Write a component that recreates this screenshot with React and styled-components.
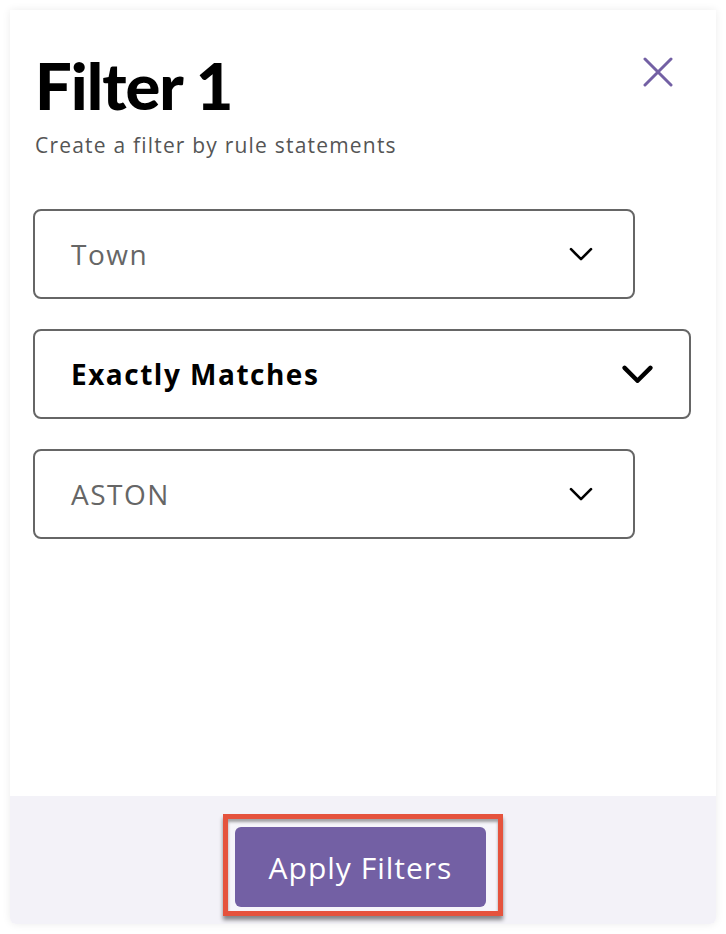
import React from 'react';
import styled, { createGlobalStyle } from 'styled-components';

const GlobalStyle = createGlobalStyle`
  body {
    margin: 0;
    background: #ffffff;
    font-family: 'Open Sans', 'Noto Sans', sans-serif;
  }
`;

const Page = styled.div`
  padding: 10px;
  width: 706px;
`;

const Card = styled.div`
  display: flex;
  flex-direction: column;
  height: 914px;
  background: #ffffff;
  border-radius: 0 0 6px 6px;
  box-shadow: 0 0 8px rgba(0, 0, 0, 0.08);
  overflow: hidden;
`;

const Body = styled.div`
  flex: 1;
  padding: 35px 43px 0 23px;
`;

const HeaderRow = styled.div`
  display: flex;
  justify-content: space-between;
  align-items: flex-start;
`;

const Title = styled.h1`
  margin: 0 0 0 2px;
  font-family: 'Lato', 'Noto Sans', sans-serif;
  font-size: 65px;
  line-height: 80px;
  font-weight: 900;
  color: #000;
  letter-spacing: -1px;
`;

const CloseButton = styled.button`
  border: none;
  background: none;
  padding: 0;
  margin-top: 12px;
  width: 30px;
  height: 30px;
  cursor: pointer;
`;

const Subtitle = styled.p`
  margin: 6px 0 0 2px;
  font-size: 21px;
  line-height: 28px;
  letter-spacing: 1.2px;
  color: #555;
`;

const Fields = styled.div`
  display: flex;
  flex-direction: column;
  gap: 30px;
  margin-top: 50px;
`;

const Select = styled.div`
  box-sizing: border-box;
  display: flex;
  align-items: center;
  justify-content: space-between;
  width: ${(p) => (p.$wide ? '658px' : '602px')};
  height: 90px;
  padding: 0 ${(p) => (p.$wide ? '36px' : '40px')} 0 36px;
  border: 2px solid #666;
  border-radius: 8px;
  font-size: 28px;
  letter-spacing: 1.5px;
  color: ${(p) => (p.$strong ? '#000' : '#666')};
  font-weight: ${(p) => (p.$strong ? 700 : 400)};
`;

const Footer = styled.div`
  display: flex;
  justify-content: center;
  height: 128px;
  padding-top: 18px;
  box-sizing: border-box;
  background: #f3f2f8;
`;

const Highlight = styled.div`
  padding: 8px 12px 4px 7px;
  height: fit-content;
  border: 5px solid #e5533d;
  box-shadow: 0 4px 4px rgba(0, 0, 0, 0.45), inset 0 3px 3px rgba(0, 0, 0, 0.35);
  background: #f6f5fa;
`;

const ApplyButton = styled.button`
  width: 251px;
  height: 80px;
  border: none;
  border-radius: 6px;
  background: #7360a4;
  color: #fff;
  font-family: 'Open Sans', 'Noto Sans', sans-serif;
  font-size: 30px;
  letter-spacing: 1px;
  cursor: pointer;
`;

const Chevron = ({ size = 24, stroke = 3 }) => (
  <svg width={size} height={size * 0.6} viewBox="0 0 24 14" fill="none">
    <path d="M2 2 L12 12 L22 2" stroke="#000" strokeWidth={stroke} strokeLinecap="round" strokeLinejoin="round" />
  </svg>
);

const CloseIcon = () => (
  <svg width="30" height="30" viewBox="0 0 30 30">
    <path d="M2 2 L28 28 M28 2 L2 28" stroke="#7360a4" strokeWidth="3" strokeLinecap="round" />
  </svg>
);

export default function App() {
  return (
    <>
      <GlobalStyle />
      <Page>
        <Card>
          <Body>
            <HeaderRow>
              <div>
                <Title>Filter 1</Title>
                <Subtitle>Create a filter by rule statements</Subtitle>
              </div>
              <CloseButton aria-label="Close">
                <CloseIcon />
              </CloseButton>
            </HeaderRow>
            <Fields>
              <Select>
                Town
                <Chevron size={24} stroke={2.6} />
              </Select>
              <Select $wide $strong>
                Exactly Matches
                <Chevron size={31} stroke={3.4} />
              </Select>
              <Select>
                ASTON
                <Chevron size={24} stroke={2.6} />
              </Select>
            </Fields>
          </Body>
          <Footer>
            <Highlight>
              <ApplyButton>Apply Filters</ApplyButton>
            </Highlight>
          </Footer>
        </Card>
      </Page>
    </>
  );
}
